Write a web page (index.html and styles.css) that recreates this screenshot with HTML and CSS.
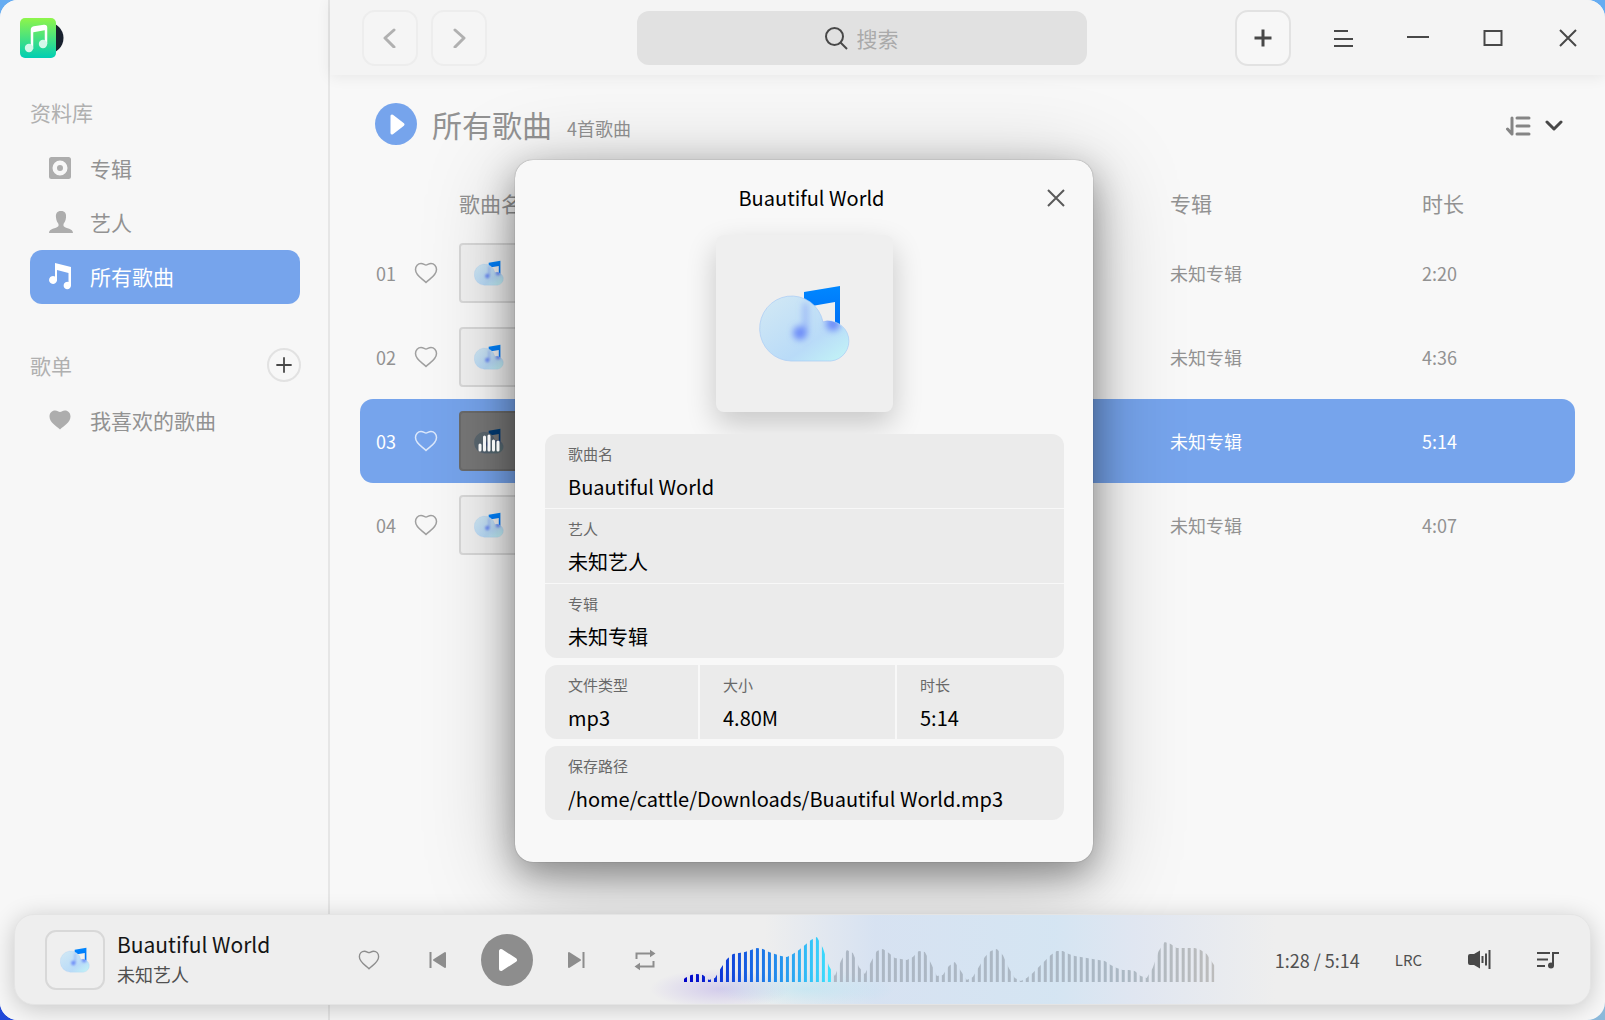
FILE: index.html
```html
<!DOCTYPE html>
<html lang="zh-CN">
<head>
<meta charset="utf-8">
<title>所有歌曲</title>
<link rel="stylesheet" href="styles.css">
</head>
<body>
<svg class="defs" aria-hidden="true">
  <defs>
    <linearGradient id="cloud-fill" x1="0" y1="0" x2="1" y2="1">
      <stop offset="0" stop-color="#d3e9f4"/>
      <stop offset=".65" stop-color="#b9dbf8"/>
      <stop offset="1" stop-color="#c3f6f6"/>
    </linearGradient>
    <linearGradient id="note-fill" x1="0" y1="0" x2="0" y2="1">
      <stop offset="0" stop-color="#0087ff"/>
      <stop offset="1" stop-color="#006cf5"/>
    </linearGradient>
    <linearGradient id="logo-fill" x1="0" y1="0" x2="0" y2="1">
      <stop offset="0" stop-color="#8ff54a"/>
      <stop offset="1" stop-color="#00ceb4"/>
    </linearGradient>
    <filter id="soft" x="-50%" y="-50%" width="200%" height="200%"><feGaussianBlur stdDeviation="3"/></filter>
    <clipPath id="cloud-clip"><path d="M32 76A32 32.500 0 1 1 64 36A20 20 0 1 1 72 76Z"/></clipPath>
  </defs>
  <symbol id="i-cloud" viewBox="0 0 92 77">
    <path fill="url(#note-fill)" d="M45 7 81 1V40C81 45 77 48 72 48S64 46 64 42 69 37 76 38V17L53 21H45Z"/>
    <path fill="url(#cloud-fill)" stroke="#a9ccf5" stroke-opacity=".7" d="M32 76A32 32.500 0 1 1 64 37A20 20 0 1 1 72 76Z"/>
    <g clip-path="url(#cloud-clip)"><g filter="url(#soft)" fill="#6f8ff8">
      <circle cx="41" cy="48" r="7"/>
      <path d="M44 18H49V48H44Z" opacity=".5"/>
      <circle cx="74" cy="39" r="7"/>
    </g></g>
  </symbol>
  <symbol id="i-heart" viewBox="0 0 24 24">
    <path d="M12 21.500C8 17.500 1.500 14.500 1.500 8.500C1.500 5 4 2.500 7 2.500C9.500 2.500 10.500 4 12 4C13.500 4 14.500 2.500 17 2.500C20 2.500 22.500 5 22.500 8.500C22.500 14.500 16 17.500 12 21.500Z"/>
  </symbol>
  <symbol id="i-plus" viewBox="0 0 20 20"><path d="M10 1.500V18.500M1.500 10H18.500"/></symbol>
  <symbol id="i-close" viewBox="0 0 20 20"><path d="M2 2 18 18M18 2 2 18"/></symbol>
</svg>

<div class="window">
  <aside class="sidebar">
    <svg class="logo" viewBox="0 0 46 44" aria-hidden="true">
      <circle cx="29" cy="21" r="15.500" fill="#18202e"/>
      <rect x="1" y="1" width="36" height="40" rx="5" fill="url(#logo-fill)"/>
      <path d="M13 32V13Q13 11 15 10.500L25 9Q27 8.700 27 10.500V27" fill="none" stroke="#fff" stroke-width="2.500"/>
      <path d="M13 10.500 27 8.500V13L13 15.500Z" fill="#fff"/>
      <circle cx="10" cy="31" r="4.200" fill="#d4f8ea"/><circle cx="24" cy="27" r="4.200" fill="#d4f8ea"/>
    </svg>
    <h2 class="group-title">资料库</h2>
    <nav class="nav">
      <a class="nav-item" href="#albums">
        <svg class="nav-icon" viewBox="0 0 24 24"><path fill-rule="evenodd" d="M3.500 1H20.500Q23 1 23 3.500V20.500Q23 23 20.500 23H3.500Q1 23 1 20.500V3.500Q1 1 3.500 1ZM12 4.500A7.500 7.500 0 1 0 12 19.500A7.500 7.500 0 1 0 12 4.500ZM12 9A3 3 0 1 1 12 15A3 3 0 1 1 12 9Z"/></svg>
        专辑</a>
      <a class="nav-item" href="#artists">
        <svg class="nav-icon" viewBox="0 0 24 24"><path d="M13 1C17 1 18.500 3.500 18 7.500C17.700 11 16.500 12.500 15.500 14V16C18 19 25 18 25 23H1C1 18 8 19 10.500 16V14C9.500 12.500 8.300 11 8 7.500C7.500 3.500 9 1 13 1Z"/></svg>
        艺人</a>
      <a class="nav-item selected" href="#songs" aria-current="page">
        <svg class="nav-icon" viewBox="0 0 24 24"><path d="M7 -1 23 3V21.500A3.700 3.700 0 1 1 20.500 18V9L9 6V16.500A4 4 0 1 1 7 12.500Z"/></svg>
        所有歌曲</a>
    </nav>
    <div class="group-head">
      <h2 class="group-title">歌单</h2>
      <button class="round-add" type="button" aria-label="新建歌单"><svg viewBox="0 0 20 20"><use href="#i-plus"/></svg></button>
    </div>
    <nav class="nav">
      <a class="nav-item" href="#favorites">
        <svg class="nav-icon nav-heart"><use href="#i-heart"/></svg>
        我喜欢的歌曲</a>
    </nav>
  </aside>

  <main class="main">
    <header class="topbar">
      <div class="history">
        <button class="square faded" type="button" aria-label="后退"><svg viewBox="0 0 20 20"><path d="M14 2 5 10 14 19"/></svg></button>
        <button class="square faded" type="button" aria-label="前进"><svg viewBox="0 0 20 20"><path d="M6 2 15 10 6 19"/></svg></button>
      </div>
      <label class="search">
        <svg viewBox="0 0 24 24" aria-hidden="true"><circle cx="10.500" cy="10.500" r="8.500"/><path d="M16.500 16.500 23 23"/></svg>
        <input type="text" placeholder="搜索" aria-label="搜索">
      </label>
      <div class="actions">
        <button class="square" type="button" aria-label="添加"><svg viewBox="0 0 20 20"><use href="#i-plus"/></svg></button>
        <div class="win-buttons">
          <button type="button" aria-label="菜单"><svg viewBox="0 0 22 20"><path d="M2 3H16M2 11H21M2 18H21"/></svg></button>
          <button type="button" aria-label="最小化"><svg viewBox="0 0 22 20"><path d="M0 9H22"/></svg></button>
          <button type="button" aria-label="最大化"><svg viewBox="0 0 22 20"><rect x="2.500" y="3" width="17" height="14"/></svg></button>
          <button type="button" aria-label="关闭"><svg viewBox="0 0 20 20"><use href="#i-close"/></svg></button>
        </div>
      </div>
    </header>

    <section class="content">
      <div class="list-head">
        <button class="play-all" type="button" aria-label="播放所有"><svg viewBox="0 0 42 42"><path d="M17 13V30L28 21.500Z"/></svg></button>
        <h1>所有歌曲</h1>
        <span class="count">4首歌曲</span>
        <button class="sort" type="button" aria-label="排序">
          <svg class="sort-lines" viewBox="0 0 26 22"><path d="M7 3V19L2.500 14M12 3H24M12 11H24M12 19H24"/></svg>
          <svg class="sort-arrow" viewBox="0 0 18 12"><path d="M2 2 9 9 16 2"/></svg>
        </button>
      </div>
      <table class="songs">
        <colgroup><col class="c-num"><col class="c-fav"><col><col class="c-album"><col class="c-time"></colgroup>
        <thead><tr><td></td><td></td><th scope="col">歌曲名</th><th scope="col">专辑</th><th scope="col">时长</th></tr></thead>
        <tbody>
          <tr><td>01</td><td><button class="fav" type="button" aria-label="收藏"><svg><use href="#i-heart"/></svg></button></td><td><div class="cover"><svg><use href="#i-cloud"/></svg></div></td><td>未知专辑</td><td>2:20</td></tr>
          <tr><td>02</td><td><button class="fav" type="button" aria-label="收藏"><svg><use href="#i-heart"/></svg></button></td><td><div class="cover"><svg><use href="#i-cloud"/></svg></div></td><td>未知专辑</td><td>4:36</td></tr>
          <tr class="current"><td>03</td><td><button class="fav" type="button" aria-label="收藏"><svg><use href="#i-heart"/></svg></button></td><td><div class="cover playing"><svg><use href="#i-cloud"/></svg><svg class="bars" viewBox="0 0 22 18"><path d="M2 16V11M6.500 16V3M11 16V2M15.500 16V7M20 16V8"/></svg></div></td><td>未知专辑</td><td>5:14</td></tr>
          <tr><td>04</td><td><button class="fav" type="button" aria-label="收藏"><svg><use href="#i-heart"/></svg></button></td><td><div class="cover"><svg><use href="#i-cloud"/></svg></div></td><td>未知专辑</td><td>4:07</td></tr>
        </tbody>
      </table>
    </section>
  </main>

  <div class="overlay">
    <section class="dialog" role="dialog" aria-labelledby="dialog-title">
      <header class="dialog-head">
        <h2 id="dialog-title">Buautiful World</h2>
        <button type="button" aria-label="关闭"><svg viewBox="0 0 20 20"><use href="#i-close"/></svg></button>
      </header>
      <div class="art"><svg><use href="#i-cloud"/></svg></div>
      <dl class="info">
        <div><dt>歌曲名</dt><dd>Buautiful World</dd></div>
        <div><dt>艺人</dt><dd>未知艺人</dd></div>
        <div><dt>专辑</dt><dd>未知专辑</dd></div>
      </dl>
      <dl class="info triple">
        <div><dt>文件类型</dt><dd>mp3</dd></div>
        <div><dt>大小</dt><dd>4.80M</dd></div>
        <div><dt>时长</dt><dd>5:14</dd></div>
      </dl>
      <dl class="info">
        <div><dt>保存路径</dt><dd>/home/cattle/Downloads/Buautiful World.mp3</dd></div>
      </dl>
    </section>
  </div>

  <footer class="player">
    <div class="now">
      <div class="cover"><svg><use href="#i-cloud"/></svg></div>
      <div class="now-text"><strong>Buautiful World</strong><span>未知艺人</span></div>
    </div>
    <div class="controls">
      <button class="fav" type="button" aria-label="收藏"><svg><use href="#i-heart"/></svg></button>
      <button type="button" aria-label="上一首"><svg viewBox="0 0 22 22"><path class="thin" d="M3.500 3V19"/><path class="solid" d="M18 4V18L7 11Z"/></svg></button>
      <button class="play" type="button" aria-label="播放"><svg viewBox="0 0 52 52"><path d="M20 17V35L34 26Z"/></svg></button>
      <button type="button" aria-label="下一首"><svg viewBox="0 0 22 22"><path class="thin" d="M18.500 3V19"/><path class="solid" d="M4 4V18L15 11Z"/></svg></button>
      <button type="button" aria-label="循环"><svg viewBox="0 0 22 22"><path class="loop" d="M2.500 10V4.500H17M19.500 12V17.500H5"/><path class="tip" d="M16 .800 21.500 4.500 16 8.200ZM6 13.800 .500 17.500 6 21.200Z"/></svg></button>
    </div>
    <svg class="wave" viewBox="0 0 531 46" preserveAspectRatio="none" role="img" aria-label="播放进度">
      <defs>
        <pattern id="stripes" width="6" height="46" patternUnits="userSpaceOnUse"><rect width="3" height="46" fill="#fff"/></pattern>
        <mask id="wave-mask" maskUnits="userSpaceOnUse" x="0" y="0" width="531" height="46">
          <polygon fill="url(#stripes)" points="0,46 0,43 1,42 7,39 13,38 19,39 25,44 31,42 37,32 43,23 49,18 55,17 61,16 67,14 73,12 79,13 85,16 91,18 97,20 103,21 109,18 115,14 121,9 127,4 133,1 139,12 145,30 151,40 157,25 163,14 169,17 175,31 181,38 187,26 193,15 199,13 205,17 211,22 217,23 223,24 229,21 235,15 241,16 247,27 253,40 259,39 265,30 271,26 277,35 283,44 289,41 295,31 301,21 307,15 313,13 319,19 325,32 331,42 337,45 343,42 349,37 355,31 361,25 367,19 373,15 379,15 385,18 391,20 397,21 403,22 409,23 415,24 421,25 427,29 433,32 439,34 445,34 451,35 457,40 463,42 469,32 475,15 481,6 487,8 493,12 499,12 505,12 511,12 517,14 523,18 529,27 531,30 531,46"/>
        </mask>
        <linearGradient id="played"><stop offset="0" stop-color="#0000c8"/><stop offset=".5" stop-color="#1b70e6"/><stop offset="1" stop-color="#3fe6ff"/></linearGradient>
        <linearGradient id="unplayed"><stop offset="0" stop-color="#adb7c4"/><stop offset=".75" stop-color="#abb8c4"/><stop offset="1" stop-color="#bcbcbc"/></linearGradient>
      </defs>
      <g mask="url(#wave-mask)"><rect width="149" height="46" fill="url(#played)"/><rect x="149" width="382" height="46" fill="url(#unplayed)"/></g>
    </svg>
    <div class="extras">
      <span class="time">1:28 / 5:14</span>
      <button class="lrc" type="button">LRC</button>
      <button type="button" aria-label="音量"><svg viewBox="0 0 24 22"><path class="fill" d="M1 7Q1 5 3 5H7L13 1.500V19.500L7 16H3Q1 16 1 14Z"/><path d="M15.500 7V14M19 4.500V16.500M22.500 1V20"/></svg></button>
      <button type="button" aria-label="播放列表"><svg viewBox="0 0 24 22"><path d="M1 4H14M1 10.500H12M1 17H9M17 16V4H23"/><circle class="fill" cx="15" cy="16.500" r="3"/></svg></button>
    </div>
  </footer>
</div>
</body>
</html>
```
FILE: styles.css
```css
* { box-sizing: border-box; }
html, body { height: 100%; }
body {
  margin: 0;
  font-family: "Noto Sans CJK SC", sans-serif;
  font-size: 18px;
  color: #929292;
  background: linear-gradient(90deg, #2048d8, #8bb9da) bottom / 100% 50% no-repeat, #66acf1;
}
h1, h2, dl, dd { margin: 0; font-weight: 400; }
button {
  padding: 0; border: 0; background: none; font: inherit; color: inherit;
  display: flex; align-items: center; justify-content: center;
}
svg { display: block; }
.defs { position: absolute; width: 0; height: 0; }

.window {
  position: relative;
  display: grid;
  grid-template-columns: 330px 1fr;
  min-height: 100%;
  border-radius: 18px;
  overflow: hidden;
  background: #f8f8f8;
}

/* sidebar */
.sidebar { border-right: 2px solid #e6e6e6; padding: 17px 28px 0 30px; background: #f7f7f7; }
.logo { width: 46px; height: 44px; margin: 0 0 36px -11px; }
.group-title { font-size: 21px; line-height: 30px; color: #b0b0b0; }
.nav { padding-top: 15px; }
.nav-item {
  display: flex; align-items: center; gap: 18px; height: 54px; padding: 0 0 2px 18px;
  border-radius: 12px; font-size: 21px; color: #929292; text-decoration: none;
}
.nav-icon { width: 24px; height: 24px; fill: #adadad; overflow: visible; }
.nav-item.selected { background: #76a4ec; color: #fff; }
.selected .nav-icon { fill: #fff; }
.group-head { display: flex; align-items: center; justify-content: space-between; margin-top: 44px; }
.group-head + .nav { padding-top: 12px; }
.round-add { width: 34px; height: 34px; margin-right: -1px; border: 2px solid #e2e2e2; border-radius: 50%; }
.round-add svg { width: 18px; height: 18px; stroke: #484848; stroke-width: 2; }

/* top bar */
.main { min-width: 0; }
.topbar {
  display: flex; align-items: center; justify-content: space-between; height: 75px;
  padding-left: 32px; background: #f4f4f4; box-shadow: 0 2px 14px rgba(0, 0, 0, .07);
}
.history { display: flex; gap: 13px; }
.square { width: 56px; height: 56px; border: 2px solid #e2e2e2; border-radius: 13px; background: #f7f7f7; }
.square svg { width: 20px; height: 20px; fill: none; stroke: #484848; stroke-width: 3; }
.square.faded { border-color: #ededed; background: #f5f5f5; }
.faded svg { stroke: #b0b0b0; stroke-linejoin: round; stroke-linecap: round; }
.search {
  display: flex; align-items: center; justify-content: center; gap: 9px;
  width: 450px; height: 54px; margin-left: 2px; border-radius: 12px; background: #e1e1e1;
}
.search svg { width: 24px; height: 24px; fill: none; stroke: #484848; stroke-width: 2; }
.search input {
  width: 44px; padding: 0; border: 0; outline: 0; background: none;
  font: inherit; font-size: 21px;
}
.search input::placeholder { color: #aaa; opacity: 1; }
.actions { display: flex; align-items: center; gap: 14px; }
.win-buttons { display: flex; }
.win-buttons button { width: 75px; height: 54px; }
.win-buttons svg { width: 22px; height: 20px; fill: none; stroke: #484848; stroke-width: 2; }

/* song list */
.content { padding: 22px 30px 0; }
.list-head { display: flex; align-items: center; height: 54px; padding: 0 11px 0 15px; }
.play-all { width: 42px; height: 42px; border-radius: 50%; background: #76a4ec; }
.play-all svg { width: 42px; height: 42px; fill: #fff; stroke: #fff; stroke-width: 3; stroke-linejoin: round; }
.list-head h1 { margin-left: 15px; font-size: 30px; line-height: 44px; }
.count { margin-left: 15px; padding-top: 8px; }
.sort { margin-left: auto; padding-top: 4px; gap: 13px; fill: none; }
.sort svg { fill: none; stroke-linecap: round; stroke-linejoin: round; stroke-width: 3; }
.sort-lines { width: 26px; height: 22px; stroke: #858585; }
.sort-arrow { width: 20px; height: 12px; stroke: #484848; }
.songs { width: 100%; margin-top: 26px; border-collapse: separate; border-spacing: 0; table-layout: fixed; }
.songs th { padding: 0 0 2px; font-size: 21px; font-weight: 400; text-align: left; }
.songs td { padding: 0; }
.songs thead tr { height: 54px; }
.songs tbody tr { height: 84px; }
.songs tbody td:first-child { padding-left: 16px; border-radius: 13px 0 0 13px; }
.songs td:last-child { border-radius: 0 13px 13px 0; }
.c-num { width: 54px; }
.c-fav { width: 45px; }
.c-album { width: 252px; }
.c-time { width: 153px; }
.fav svg { width: 24px; height: 24px; fill: none; stroke: #a0a0a0; stroke-width: 1.5; }
.current td { background: #76a4ec; color: #fff; }
.current .fav svg { stroke: #dce8fb; }
.cover {
  display: grid; place-items: center; width: 60px; height: 60px;
  border: 2px solid #d8d8d8; border-radius: 4px; background: #f1f1f1;
}
.cover svg { grid-area: 1 / 1; width: 30px; height: 26px; }
.cover.playing { border-color: #6a6a6a; background: #777; }
.playing svg:first-child { filter: brightness(.45); }
.cover .bars { z-index: 1; width: 22px; height: 18px; margin-top: 4px; fill: none; stroke: #f4f4f4; stroke-width: 3; stroke-linecap: round; }

/* song details */
.overlay { position: absolute; inset: 0; display: flex; align-items: center; justify-content: center; padding: 2px 0 0 3px; }
.dialog {
  width: 578px; padding: 0 29px 42px 30px; border-radius: 18px; background: #f8f8f8; color: #000;
  box-shadow: 0 0 1px rgba(0, 0, 0, .5), 0 12px 36px rgba(0, 0, 0, .36), 0 16px 90px rgba(0, 0, 0, .26);
}
.dialog-head { display: grid; grid-template-columns: 1fr auto 1fr; align-items: center; height: 75px; }
.dialog-head h2 { grid-column: 2; font-size: 20px; padding-left: 14px; }
.dialog-head button { justify-self: end; width: 20px; height: 20px; margin-right: -2px; }
.dialog-head svg { width: 20px; height: 20px; stroke: #5a5a5a; stroke-width: 2; }
.art {
  display: grid; place-items: center; width: 177px; height: 177px; margin: 0 auto 22px;
  border-radius: 8px; background: #efefef; box-shadow: 0 12px 30px rgba(0, 0, 0, .2);
}
.art svg { width: 92px; height: 77px; }
.info { display: grid; gap: 1px; margin-top: 7px; border-radius: 12px; overflow: hidden; }
.info div { height: 74px; padding: 9px 23px 0; background: #ebebeb; }
.info dt { font-size: 15px; line-height: 22px; color: #686868; }
.info dd { font-size: 20px; line-height: 30px; margin-top: 7px; }
.triple { grid-template-columns: 153px 195px 1fr; gap: 2px; }

/* player */
.player {
  position: absolute; left: 14px; right: 14px; bottom: 15px;
  display: flex; align-items: center; height: 91px; padding: 0 30px;
  border: 1px solid #e4e4e4; border-radius: 20px; color: #505050;
  background:
    radial-gradient(ellipse 90px 20px at 790px 74px, rgba(150, 225, 245, .35), transparent),
    radial-gradient(ellipse 70px 20px at 705px 74px, rgba(160, 140, 230, .35), transparent),
    linear-gradient(90deg, transparent 750px, rgba(205, 221, 243, .7) 860px, rgba(202, 225, 244, .7) 1040px, rgba(215, 225, 243, .6) 1120px, transparent 1260px),
    #eee;
  box-shadow: 0 4px 24px rgba(0, 0, 0, .2);
}
.now { display: flex; align-items: center; gap: 12px; width: 289px; }
.now .cover { border-radius: 11px; background: #efefef; }
.now-text { display: grid; gap: 1px; padding-bottom: 2px; }
.now-text strong { font-size: 21px; line-height: 30px; font-weight: 400; color: #151515; }
.now-text span { line-height: 28px; }
.controls { display: grid; grid-template-columns: repeat(5, 69px); place-items: center; margin-right: 5px; }
.controls svg { width: 22px; height: 22px; }
.controls .fav svg { stroke: #8d8d8d; }
.controls .thin, .loop { fill: none; stroke: #8d8d8d; stroke-width: 2; }
.controls .solid { fill: #8d8d8d; stroke: #8d8d8d; stroke-width: 2; stroke-linejoin: round; }
.tip { fill: #8d8d8d; }
.controls .play { width: 52px; height: 52px; border-radius: 50%; background: #8d8d8d; }
.controls .play svg { width: 52px; height: 52px; fill: #fff; stroke: #fff; stroke-width: 4; stroke-linejoin: round; }
.wave { flex: 1; min-width: 0; height: 46px; margin-bottom: 2px; }
.extras { display: flex; align-items: center; gap: 45px; margin-left: 60px; }
.extras button { min-width: 24px; }
.extras svg { width: 24px; height: 22px; fill: none; stroke: #484848; stroke-width: 2; }
.extras .fill { fill: #484848; stroke: none; }
.time { margin-right: -10px; }
.lrc { font-size: 15px; }
```
